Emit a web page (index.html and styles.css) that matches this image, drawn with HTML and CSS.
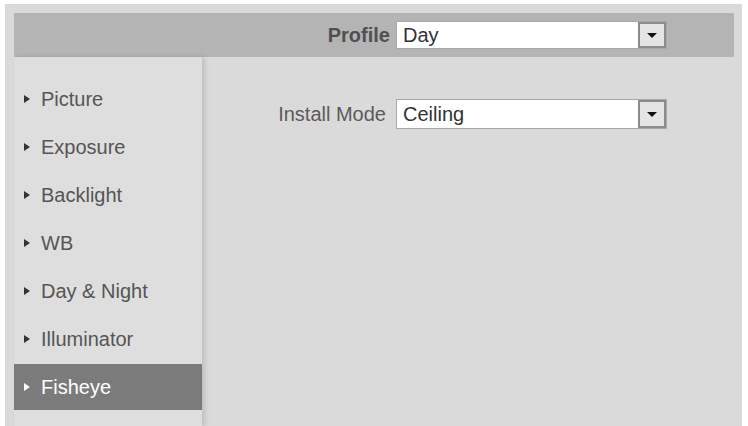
FILE: index.html
```html
<!DOCTYPE html>
<html lang="en">
<head>
    <meta charset="UTF-8">
    <title>Fisheye</title>
    <link rel="stylesheet" href="styles.css">
</head>
<body>
    <div class="panel">
        <div class="profile-bar">
            <label class="profile-label">Profile</label>
            <div class="select select-profile">
                <span class="select-value">Day</span>
                <span class="select-btn"><span class="arrow"></span></span>
            </div>
        </div>
        <div class="main">
            <ul class="menu">
                <li class="menu-item"><span class="tri"></span>Picture</li>
                <li class="menu-item"><span class="tri"></span>Exposure</li>
                <li class="menu-item"><span class="tri"></span>Backlight</li>
                <li class="menu-item"><span class="tri"></span>WB</li>
                <li class="menu-item"><span class="tri"></span>Day &amp; Night</li>
                <li class="menu-item"><span class="tri"></span>Illuminator</li>
                <li class="menu-item active"><span class="tri"></span>Fisheye</li>
            </ul>
            <div class="content">
                <div class="form-row">
                    <label class="form-label">Install Mode</label>
                    <div class="select">
                        <span class="select-value">Ceiling</span>
                        <span class="select-btn"><span class="arrow"></span></span>
                    </div>
                </div>
            </div>
        </div>
    </div>
</body>
</html>
```

FILE: styles.css
```css
body {
    font-family: 'Liberation Sans', Arial, sans-serif;
    margin: 0;
    padding: 0;
    background: white;
    overflow: hidden;
}
.panel {
    margin: 4px 6px 0 5px;
    padding: 9px 8px 0 9px;
    height: 422px;
    box-sizing: border-box;
    background: #dadada;
}
.profile-bar {
    display: flex;
    align-items: center;
    height: 44px;
    background: #b4b4b4;
}
.profile-label {
    width: 376px;
    text-align: right;
    font-size: 20px;
    font-weight: bold;
    color: #505050;
    margin-right: 6px;
}
.main {
    display: flex;
    height: 370px;
}
.menu {
    list-style: none;
    margin: 0;
    padding: 19px 0 0;
    width: 188px;
    background: #dedede;
    box-shadow: 3px 0 5px rgba(0, 0, 0, 0.12);
    position: relative;
}
.menu-item {
    display: flex;
    align-items: center;
    height: 46px;
    margin-bottom: 2px;
    padding-left: 10px;
    font-size: 20px;
    color: #555;
}
.menu-item.active {
    background: #7b7b7b;
    color: white;
}
.tri {
    width: 0;
    height: 0;
    border-top: 4px solid transparent;
    border-bottom: 4px solid transparent;
    border-left: 6px solid #333;
    margin-right: 11px;
}
.active .tri {
    border-left-color: white;
}
.content {
    flex: 1;
    padding-top: 42px;
}
.form-row {
    display: flex;
    align-items: center;
}
.form-label {
    width: 184px;
    text-align: right;
    font-size: 20px;
    color: #5a5a5a;
    margin-right: 10px;
}
.select {
    display: flex;
    align-items: center;
    width: 271px;
    height: 30px;
    box-sizing: border-box;
    background: white;
    border: 1px solid #a8a8a8;
}
.select-profile {
    height: 28px;
}
.select-value {
    flex: 1;
    padding-left: 6px;
    font-size: 20px;
    color: #333;
}
.select-btn {
    display: flex;
    align-items: center;
    justify-content: center;
    width: 28px;
    height: 100%;
    box-sizing: border-box;
    background: #e4e4e4;
    border: 2px solid #8c8c8c;
}
.arrow {
    width: 0;
    height: 0;
    border-left: 5px solid transparent;
    border-right: 5px solid transparent;
    border-top: 5px solid #111;
}
```
